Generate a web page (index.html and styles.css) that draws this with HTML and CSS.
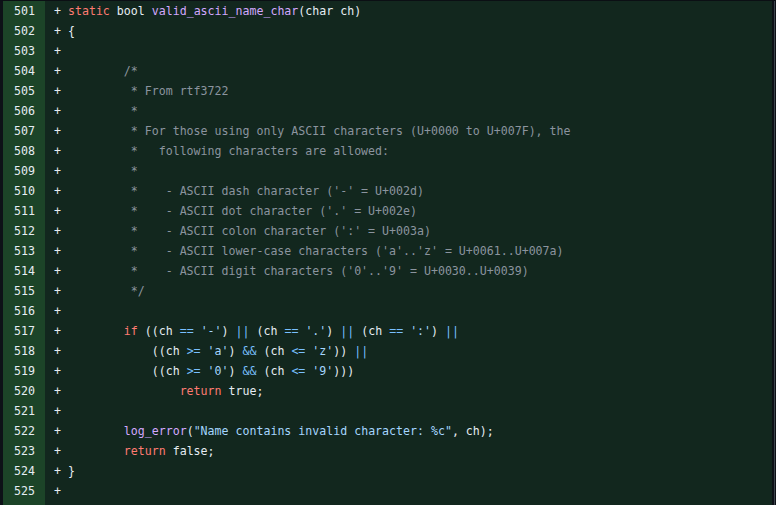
FILE: index.html
```html
<!DOCTYPE html>
<html>
<head>
<meta charset="utf-8">
<link rel="stylesheet" href="styles.css">
</head>
<body>
<div class="frame">
  <div class="diff">
    <div class="gutter">
      <div class="num">501</div><div class="num">502</div><div class="num">503</div><div class="num">504</div><div class="num">505</div>
      <div class="num">506</div><div class="num">507</div><div class="num">508</div><div class="num">509</div><div class="num">510</div>
      <div class="num">511</div><div class="num">512</div><div class="num">513</div><div class="num">514</div><div class="num">515</div>
      <div class="num">516</div><div class="num">517</div><div class="num">518</div><div class="num">519</div><div class="num">520</div>
      <div class="num">521</div><div class="num">522</div><div class="num">523</div><div class="num">524</div><div class="num">525</div>
    </div>
    <div class="code">
<div class="ln">+ <span class="kw">static</span> bool <span class="fn">valid_ascii_name_char</span>(char ch)</div>
<div class="ln">+ {</div>
<div class="ln">+</div>
<div class="ln">+         <span class="cm">/*</span></div>
<div class="ln">+          <span class="cm">* From rtf3722</span></div>
<div class="ln">+          <span class="cm">*</span></div>
<div class="ln">+          <span class="cm">* For those using only ASCII characters (U+0000 to U+007F), the</span></div>
<div class="ln">+          <span class="cm">*   following characters are allowed:</span></div>
<div class="ln">+          <span class="cm">*</span></div>
<div class="ln">+          <span class="cm">*    - ASCII dash character ('-' = U+002d)</span></div>
<div class="ln">+          <span class="cm">*    - ASCII dot character ('.' = U+002e)</span></div>
<div class="ln">+          <span class="cm">*    - ASCII colon character (':' = U+003a)</span></div>
<div class="ln">+          <span class="cm">*    - ASCII lower-case characters ('a'..'z' = U+0061..U+007a)</span></div>
<div class="ln">+          <span class="cm">*    - ASCII digit characters ('0'..'9' = U+0030..U+0039)</span></div>
<div class="ln">+          <span class="cm">*/</span></div>
<div class="ln">+</div>
<div class="ln">+         <span class="kw">if</span> ((ch <span class="op">==</span> <span class="st">'-'</span>) <span class="op">||</span> (ch <span class="op">==</span> <span class="st">'.'</span>) <span class="op">||</span> (ch <span class="op">==</span> <span class="st">':'</span>) <span class="op">||</span></div>
<div class="ln">+             ((ch <span class="op">&gt;=</span> <span class="st">'a'</span>) <span class="op">&amp;&amp;</span> (ch <span class="op">&lt;=</span> <span class="st">'z'</span>)) <span class="op">||</span></div>
<div class="ln">+             ((ch <span class="op">&gt;=</span> <span class="st">'0'</span>) <span class="op">&amp;&amp;</span> (ch <span class="op">&lt;=</span> <span class="st">'9'</span>)))</div>
<div class="ln">+                 <span class="kw">return</span> true;</div>
<div class="ln">+</div>
<div class="ln">+         <span class="fn">log_error</span>(<span class="st">"Name contains invalid character: %c"</span>, ch);</div>
<div class="ln">+         <span class="kw">return</span> false;</div>
<div class="ln">+ }</div>
<div class="ln">+</div>
    </div>
  </div>
  <div class="rail"></div>
</div>
</body>
</html>
```

FILE: styles.css
```css
html, body {
  margin: 0;
  padding: 0;
  background: #0d1117;
  height: 100%;
  overflow: hidden;
}

.frame {
  display: flex;
  height: 505px;
  border-top: 1px solid #0b0f14;
  box-sizing: border-box;
  border-left: 3px solid #0d1117;
}

.diff {
  flex: 1;
  display: grid;
  grid-template-columns: 42px 1fr;
  font-family: "DejaVu Sans Mono", "Liberation Mono", monospace;
  font-size: 11.6px;
  line-height: 20px;
  color: #e6edf3;
}

.gutter {
  background: #1c4428;
}

.num {
  text-align: right;
  padding-right: 10px;
  height: 20px;
  color: #e6edf3;
}

.code {
  background: #12271e;
  padding-left: 9px;
}

.ln {
  white-space: pre;
  height: 20px;
}

.kw { color: #ff7b72; }
.fn { color: #d2a8ff; }
.cm { color: #8b949e; }
.st { color: #a5d6ff; }
.op { color: #79c0ff; }

.rail {
  width: 4px;
  background: linear-gradient(to right, #0d1117 2px, #3d444d 2px, #3d444d 3px, #0d1117 3px);
}
```
